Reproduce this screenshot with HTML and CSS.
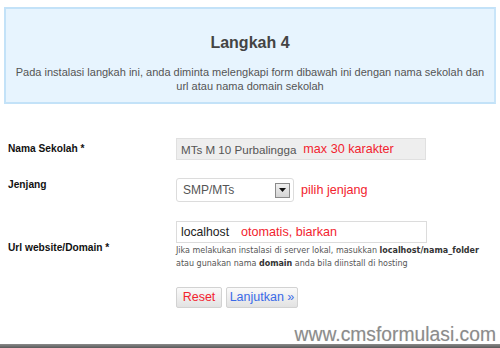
FILE: index.html
```html
<!DOCTYPE html>
<html lang="id">
<head>
<meta charset="utf-8">
<title>Langkah 4</title>
<link rel="stylesheet" href="styles.css">
</head>
<body>
<div class="page">
  <div class="intro">
    <h1 class="intro-title">Langkah 4</h1>
    <p class="intro-text">Pada instalasi langkah ini, anda diminta melengkapi form dibawah ini dengan nama sekolah dan<br>url atau nama domain sekolah</p>
  </div>

  <div class="form">
    <div class="row row-name">
      <div class="label">Nama Sekolah *</div>
      <div class="field">
        <div class="textbox readonly"><span class="value muted">MTs M 10 Purbalingga</span><span class="hint hint-name">max 30 karakter</span></div>
      </div>
    </div>

    <div class="row row-level">
      <div class="label">Jenjang</div>
      <div class="field field-inline">
        <div class="selectbox"><span class="value muted">SMP/MTs</span><span class="arrow"><svg width="7" height="4" viewBox="0 0 7 4"><polygon points="0,0 7,0 3.5,4" fill="#111"/></svg></span></div>
        <span class="hint hint-level">pilih jenjang</span>
      </div>
    </div>

    <div class="row row-url">
      <div class="label">Url website/Domain *</div>
      <div class="field">
        <div class="textbox"><span class="value dark">localhost</span><span class="hint hint-url">otomatis, biarkan</span></div>
        <p class="help">Jika melakukan instalasi di server lokal, masukkan <b>localhost/nama_folder</b><br>atau gunakan nama <b>domain</b> anda bila diinstall di hosting</p>
      </div>
    </div>

    <div class="actions">
      <button class="btn btn-reset" type="button">Reset</button>
      <button class="btn btn-next" type="button">Lanjutkan &raquo;</button>
    </div>
  </div>

  <div class="footer">
    <div class="watermark">www.cmsformulasi.com</div>
    <div class="bar"></div>
  </div>
</div>
</body>
</html>
```
FILE: styles.css
```css
* { box-sizing: border-box; }
html, body { margin: 0; padding: 0; background: #fff; }
body {
  font-family: "Liberation Sans", Arial, sans-serif;
  color: #333;
  width: 500px;
  height: 348px;
  overflow: hidden;
}
.page { display: flex; flex-direction: column; height: 348px; }

.intro {
  margin: 7px 4px 0 4px;
  height: 97px;
  background: #e7f4fe;
  border: 2px solid #c3e2f8;
  border-right-color: #c9e5f9;
  padding-top: 24px;
  text-align: center;
}
.intro-title {
  margin: 0;
  font-size: 16px;
  line-height: 20px;
  font-weight: bold;
  color: #444;
}
.intro-text {
  margin: 12px 0 0 0;
  font-size: 11px;
  line-height: 14px;
  color: #555;
}

.form { padding-left: 8px; }
.row { display: grid; grid-template-columns: 168px 1fr; }
.label {
  font-size: 10.2px;
  line-height: 14px;
  font-weight: bold;
  color: #111;
}
.row-name { margin-top: 34px; align-items: center; }
.row-level { margin-top: 18px; align-items: start; }
.row-url { margin-top: 19px; align-items: center; }
.row-url .label { padding-top: 4px; }

.field-inline { display: flex; align-items: center; gap: 7px; }

.textbox {
  width: 251px;
  height: 22px;
  border: 1px solid #dcdcdc;
  background: #fff;
  display: flex;
  align-items: center;
  padding-left: 4px;
  white-space: nowrap;
}
.textbox.readonly { width: 250px; background: #eeeeee; border-color: #e0e0e0; }
.value { font-size: 11.6px; }
.muted { color: #555; }
.dark { color: #222; font-size: 12.2px; }
.hint { color: #f2232e; font-size: 12.6px; }
.hint-name { margin-left: 7px; }
.hint-url { margin-left: 12px; }

.selectbox {
  width: 118px;
  height: 24px;
  border: 1px solid #dcdcdc;
  border-radius: 3px;
  background: #fff;
  display: flex;
  align-items: center;
  justify-content: space-between;
  padding: 0 3px 0 6px;
}
.selectbox .value { font-size: 12px; }
.arrow {
  width: 15px;
  height: 15px;
  border: 1px solid #8a8a8a;
  background: linear-gradient(#f0f0f0, #d4d4d4);
  display: flex;
  align-items: center;
  justify-content: center;
}
.arrow svg { display: block; }

.help {
  margin: 1px 0 0 0;
  font-family: "DejaVu Sans", Verdana, sans-serif;
  font-size: 8px;
  line-height: 13px;
  color: #555;
}
.help b { color: #333; }

.actions {
  margin-top: 17px;
  padding-left: 168px;
  display: flex;
  gap: 4px;
}
.btn {
  height: 21px;
  padding: 0;
  white-space: nowrap;
  font-family: "Liberation Sans", Arial, sans-serif;
  font-size: 12.5px;
  border: 1px solid #d2d2d2;
  border-radius: 2px;
  background: linear-gradient(#fafafa, #e2e2e2);
  line-height: 19px;
  text-align: center;
}
.btn-reset { width: 46px; color: #f2232e; }
.btn-next { width: 72px; color: #3a6ae8; }

.footer { margin-top: auto; }
.watermark {
  text-align: right;
  padding-right: 4px;
  font-size: 19.3px;
  line-height: 18px;
  height: 18px;
  color: #8c8c8c;
  text-shadow: 0 0 1px #d8d8d8;
}
.bar {
  height: 4px;
  background: linear-gradient(#8a8a8a, #5a5a5a);
}
```
